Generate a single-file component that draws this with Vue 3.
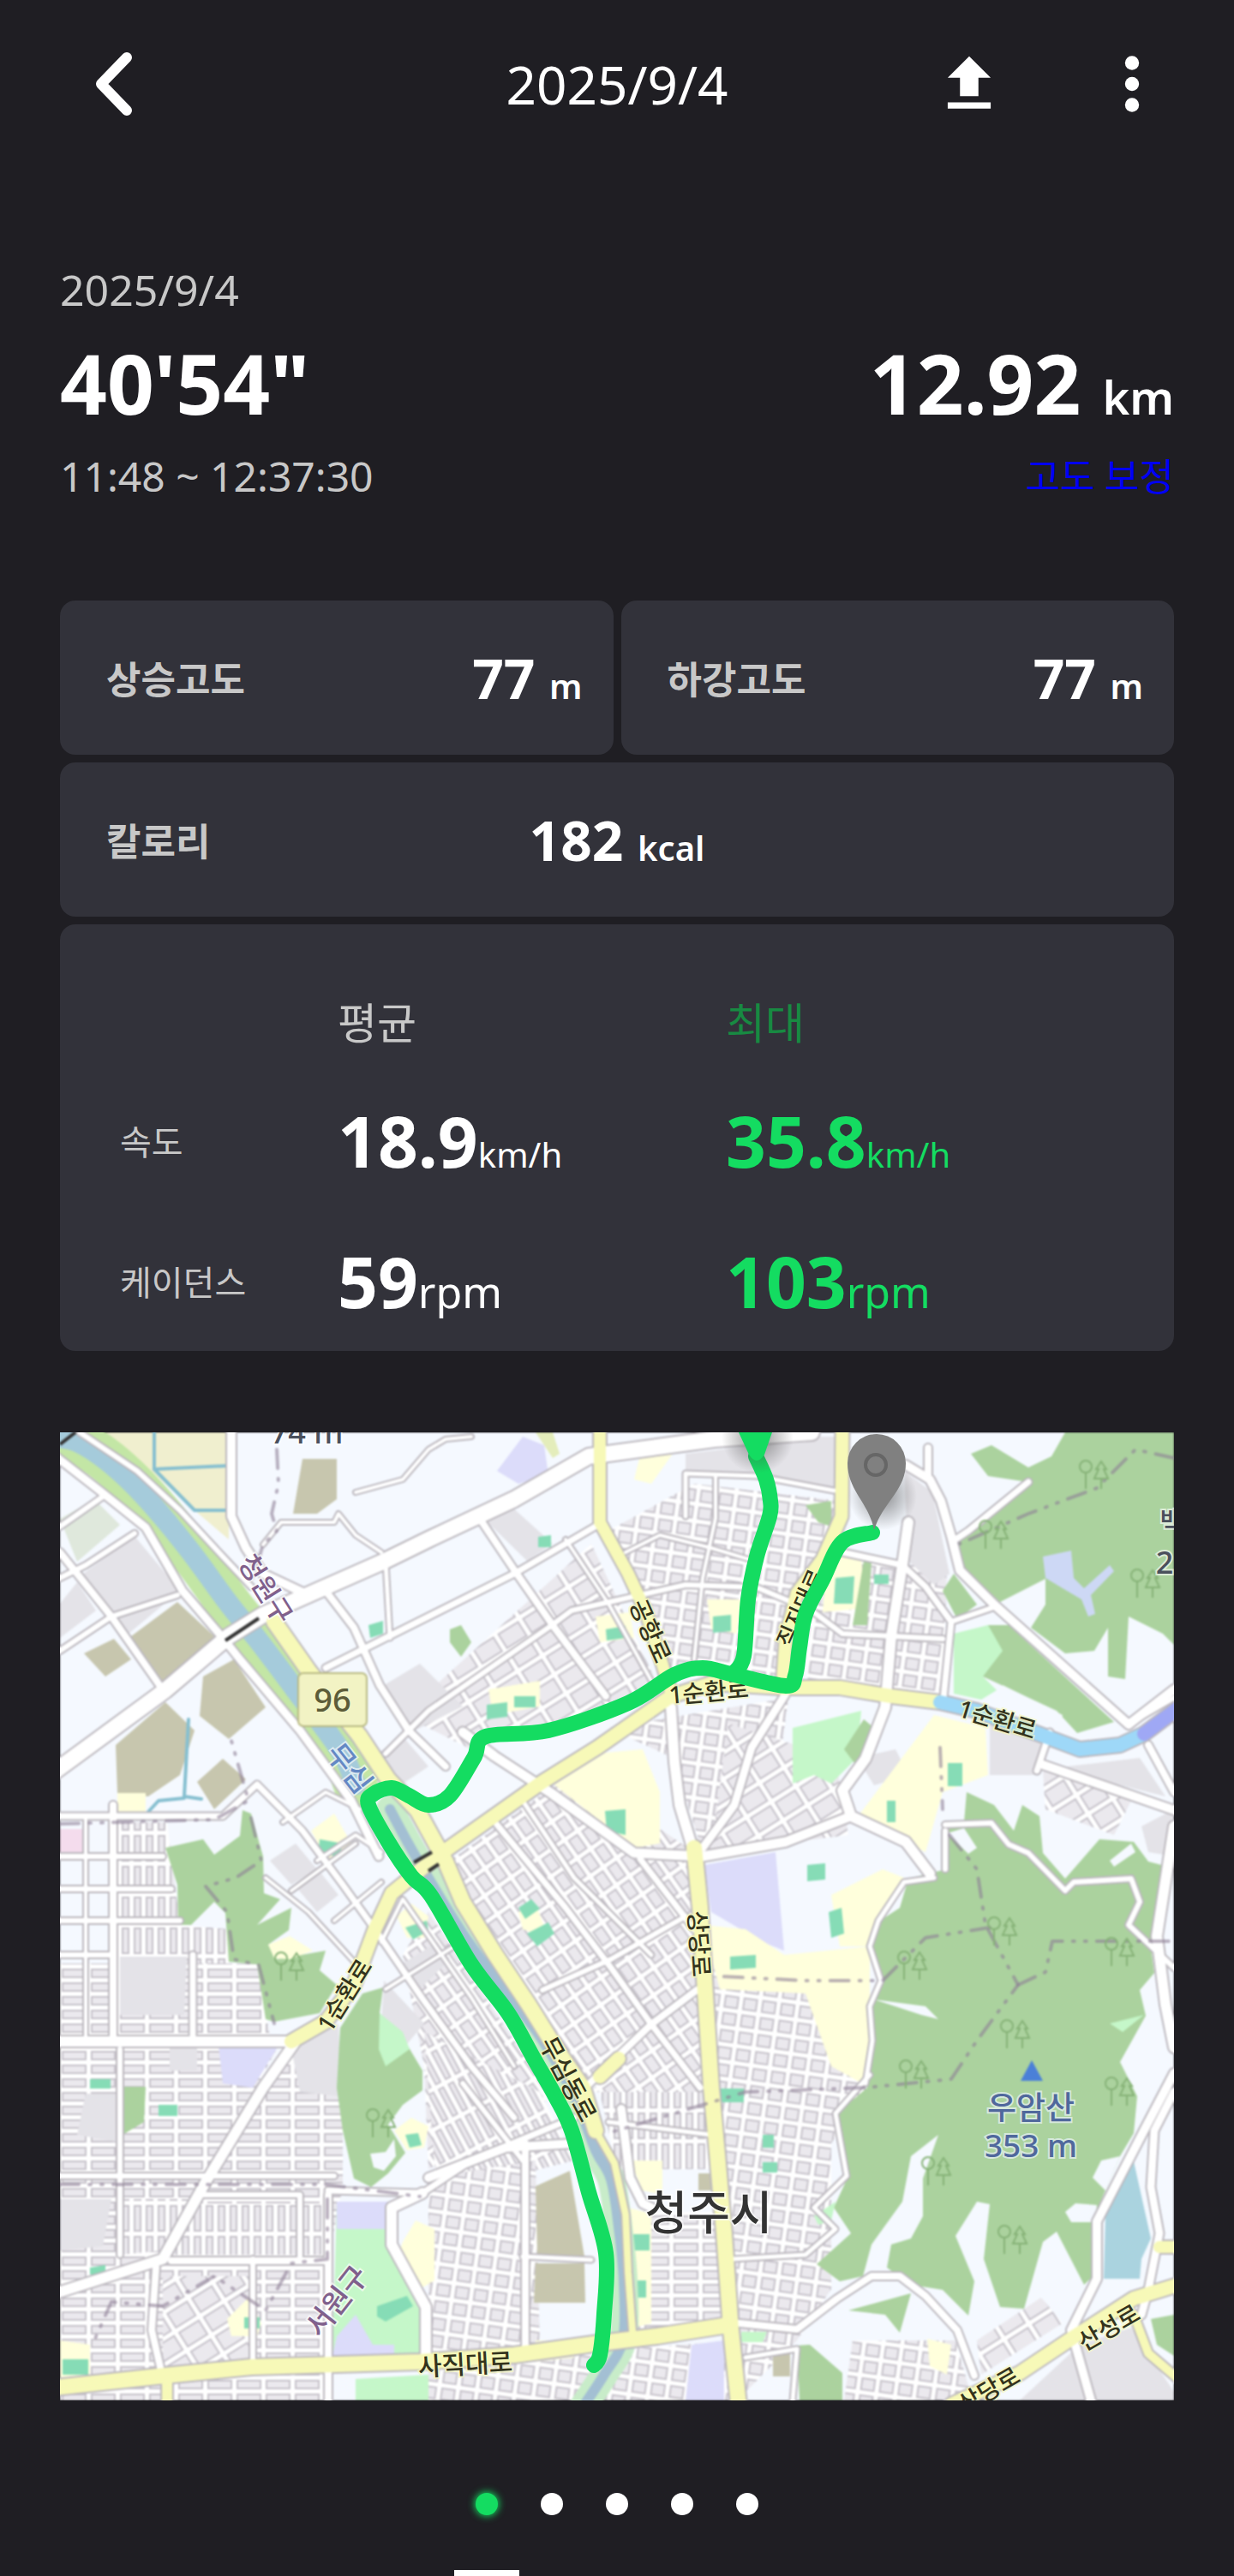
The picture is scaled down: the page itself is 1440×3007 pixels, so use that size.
<template>
  <div class="page">
    <header class="top-bar">
      <button class="icon-btn back-btn" aria-label="뒤로">
        <svg viewBox="0 0 98 98" width="98" height="98">
          <path d="M78 18 L48 49 L78 80" fill="none" stroke="#fff" stroke-width="12" stroke-linecap="round" stroke-linejoin="round" />
        </svg>
      </button>
      <h1>{{ ride.date }}</h1>
      <div class="actions">
        <button class="icon-btn" aria-label="공유">
          <svg viewBox="0 0 24 24" width="86" height="86">
            <path d="M9 16h6v-6h4l-7-7-7 7h4zM5 18h14v2H5z" fill="#fff" />
          </svg>
        </button>
        <button class="icon-btn" aria-label="더보기">
          <svg viewBox="0 0 24 24" width="98" height="98" fill="#fff">
            <circle cx="12" cy="6" r="2" />
            <circle cx="12" cy="12" r="2" />
            <circle cx="12" cy="18" r="2" />
          </svg>
        </button>
      </div>
    </header>

    <main>
      <section class="summary">
        <div class="sub">{{ ride.date }}</div>
        <div class="totals">
          <strong>{{ ride.duration }}</strong>
          <strong>{{ ride.distance }} <small>km</small></strong>
        </div>
        <div class="sub totals">
          <span>{{ ride.period }}</span>
          <a href="#" @click.prevent>고도 보정</a>
        </div>
      </section>

      <section class="cards">
        <div v-for="card in cards" :key="card.label" class="card" :class="{ wide: card.wide }">
          <span class="label">{{ card.label }}</span>
          <span class="value">{{ card.value }} <small>{{ card.unit }}</small></span>
        </div>
        <div class="card stats">
          <table>
            <thead>
              <tr>
                <th class="name"></th>
                <th class="avg">평균</th>
                <th class="max">최대</th>
              </tr>
            </thead>
            <tbody>
              <tr v-for="row in stats" :key="row.name">
                <th class="name">{{ row.name }}</th>
                <td><b>{{ row.avg }}</b><span :class="row.size">{{ row.unit }}</span></td>
                <td class="max"><b>{{ row.max }}</b><span :class="row.size">{{ row.unit }}</span></td>
              </tr>
            </tbody>
          </table>
        </div>
      </section>

      <svg class="map" viewBox="0 0 1300 1130" role="img" aria-label="주행 경로">
        <defs>
          <pattern
            v-for="p in patterns"
            :id="p.id"
            :key="p.id"
            :width="p.w"
            :height="p.h"
            patternUnits="userSpaceOnUse"
            :patternTransform="`rotate(${p.angle})`"
          >
            <rect :width="p.w" :height="p.h" fill="#fff" />
            <rect x="3" y="3" :width="p.w - 7" :height="p.h - 7" fill="#ebe9ee" stroke="#c6c2ca" stroke-width="2" />
          </pattern>
          <radialGradient id="pinShadow">
            <stop offset="0" stop-color="#444" stop-opacity="0.6" />
            <stop offset="1" stop-color="#444" stop-opacity="0" />
          </radialGradient>
          <g id="trees" fill="none" stroke="#86b277" stroke-width="2">
            <circle cx="-10" cy="-8" r="7" />
            <path d="M-10 -1V18M8 -14L2 -5H5L0 6H16L11 -5H14ZM8 6V18" />
          </g>
        </defs>

        <g class="base">
          <rect width="1300" height="1130" fill="#f5f9ff" />
          <polygon v-for="(a, i) in areas" :key="'a' + i" :points="a[1]" :fill="a[0]" />

          <!-- river -->
          <path class="line" :d="smooth(river)" stroke="#c3e6a5" stroke-width="52" />
          <path class="line" :d="smooth(river)" stroke="#a5cbdb" stroke-width="24" />
          <path class="line" :d="smooth(riverSouth)" stroke="#c8ecc9" stroke-width="32" />
          <path class="line" :d="smooth(riverSouth)" stroke="#a3bfd3" stroke-width="12" />
          <polyline v-for="(c, i) in canals" :key="'c' + i" class="line" :points="c" stroke="#86bfd0" stroke-width="4" />

          <!-- roads: casing first, then surface -->
          <polyline v-for="(r, i) in roads" :key="'k' + i" class="line" :points="r[2]" stroke="#bcb8be" :stroke-width="r[1] + 4" />
          <polyline v-for="(r, i) in roads" :key="'r' + i" class="line" :points="r[2]" :stroke="r[0]" :stroke-width="r[1]" />

          <polyline v-for="(b, i) in borders" :key="'b' + i" class="line border" :points="b" />
          <path d="M413 502 L434 490 M430 512 L442 504 M193 243 L232 217 M0 14 L18 0" stroke="#333" stroke-width="4" />
          <use v-for="(t, i) in trees" :key="'t' + i" href="#trees" :x="t[0]" :y="t[1]" />
          <path d="M1134 733 L1147 757 H1121Z" fill="#4b80d8" />
          <rect x="278" y="281" width="80" height="62" rx="6" fill="#f2f3c4" stroke="#b9ba84" stroke-width="2" />
        </g>

        <g class="labels">
          <text
            v-for="(l, i) in labels"
            :key="'l' + i"
            :class="l.kind"
            :font-size="l.size"
            :transform="`translate(${l.x} ${l.y}) rotate(${l.angle || 0})`"
            dy="0.36em"
          >{{ l.text }}</text>
        </g>

        <path v-for="(r, i) in route" :key="'route' + i" class="line" :d="smooth(r)" stroke="#14dc61" stroke-width="18" />
        <circle cx="814" cy="6" r="42" fill="url(#pinShadow)" />
        <path d="M792 0H831L822 26Q813 40 804 26Z" fill="#14dc61" />
        <circle cx="960" cy="74" r="40" fill="url(#pinShadow)" />
        <path d="M950 114 C944 82 919 68 919 36 A34 34 0 0 1 987 36 C987 68 960 82 950 114Z" fill="#808080" />
        <circle cx="952" cy="38" r="12" fill="none" stroke="#666" stroke-width="4" />
      </svg>

      <nav class="dots" aria-label="페이지">
        <button
          v-for="n in 5"
          :key="n"
          :class="{ active: n === current }"
          :aria-label="n + '페이지'"
          @click="current = n"
        ></button>
      </nav>
    </main>
    <div class="tab-line"><i></i></div>
  </div>
</template>

<script setup>
import { ref } from 'vue'

const current = ref(1)

const ride = {
  date: '2025/9/4',
  duration: '40\'54"',
  distance: '12.92',
  period: '11:48 ~ 12:37:30'
}

const cards = [
  { label: '상승고도', value: 77, unit: 'm' },
  { label: '하강고도', value: 77, unit: 'm' },
  { label: '칼로리', value: 182, unit: 'kcal', wide: true }
]

const stats = [
  { name: '속도', avg: '18.9', max: '35.8', unit: 'km/h', size: 'small' },
  { name: '케이던스', avg: '59', max: '103', unit: 'rpm', size: 'large' }
]

// curve through every point of an "x,y x,y" list
function smooth(points) {
  const p = points.split(' ').map(s => s.split(',').map(Number))
  let d = `M${p[0]}`
  for (let i = 0; i < p.length - 1; i++) {
    const a = p[i - 1] || p[i]
    const b = p[i]
    const c = p[i + 1]
    const e = p[i + 2] || c
    d += `C${b[0] + (c[0] - a[0]) / 6} ${b[1] + (c[1] - a[1]) / 6} `
    d += `${c[0] - (e[0] - b[0]) / 6} ${c[1] - (e[1] - b[1]) / 6} ${c[0]} ${c[1]}`
  }
  return d
}

const patterns = [
  { id: 'flat', angle: 0, w: 34, h: 16 },
  { id: 'tall', angle: 0, w: 14, h: 36 },
  { id: 'tilt', angle: 55, w: 26, h: 19 },
  { id: 'slope', angle: -32, w: 34, h: 26 },
  { id: 'lean', angle: 8, w: 22, h: 20 },
  { id: 'curve', angle: 62, w: 42, h: 13 }
]

// [fill, points]
const forest = '#abd29e'
const park = '#c5f7c9'
const school = '#ffffdc'
const pitch = '#86dcb6'
const bare = '#c7c6ae'
const block = '#e4e3e8'
const lilac = '#dcdcfa'
const ground = '#f5f9ff'

const areas = [
  // street blocks
  ['url(#tall)', '62,455 125,455 140,575 197,580 197,620 62,620'],
  ['url(#flat)', '0,620 230,620 245,705 0,705'],
  ['url(#flat)', '0,716 255,716 120,965 0,1000'],
  ['url(#flat)', '270,716 330,760 330,880 313,965 125,965'],
  ['url(#tall)', '150,900 310,900 310,960 125,960'],
  ['url(#tall)', '70,895 150,895 120,955 70,960'],
  ['url(#flat)', '0,1010 120,970 313,970 313,1090 0,1110'],
  ['url(#slope)', '120,985 225,985 225,1085 120,1092'],
  ['url(#flat)', '0,1120 310,1095 313,1130 0,1130'],
  ['url(#tilt)', '400,610 430,560 570,770 560,800 430,860 425,740'],
  ['url(#curve)', '425,700 560,770 600,850 440,890'],
  ['url(#slope)', '400,330 620,130 700,300 480,370'],
  ['url(#tilt)', '455,500 600,395 740,490 750,700 640,770 590,735'],
  ['url(#lean)', '640,115 740,60 910,80 850,290 710,285'],
  ['url(#lean)', '640,345 850,310 840,385 910,440 860,480 750,490 715,380'],
  ['url(#slope)', '780,340 905,380 920,470 760,490'],
  ['url(#lean)', '880,140 1035,160 1030,308 870,300'],
  ['url(#lean)', '430,870 555,850 560,1070 430,1080'],
  ['url(#tall)', '630,770 760,770 770,860 650,860'],
  ['url(#flat)', '660,910 775,910 780,1045 670,1050'],
  ['url(#tilt)', '680,690 755,660 765,770 620,770'],
  ['url(#lean)', '760,620 945,670 940,770 900,830 900,1000 860,1060 790,1130 775,900'],
  ['url(#lean)', '430,1085 800,1060 800,1130 430,1130'],
  ['url(#slope)', '1070,1060 1145,1010 1170,1040 1075,1100'],
  ['url(#lean)', '925,1060 1045,1060 1065,1130 915,1130'],
  ['url(#slope)', '1147,395 1250,430 1230,470 1150,440'],
  // plain blocks
  [block, '87,121 140,185 80,235 27,165'],
  ['#dfe8dc', '0,101 40,78 70,108 20,151'],
  [block, '0,200 20,175 42,208 0,240'],
  [block, '497,103 525,85 575,130 545,150'],
  [block, '370,300 420,270 470,320 410,350'],
  [block, '370,375 400,355 430,390 400,410'],
  [block, '245,500 275,480 300,510 270,528'],
  [block, '275,530 305,515 325,540 300,560'],
  [block, '70,612 148,612 145,680 70,680'],
  [block, '270,720 325,690 328,775 280,770'],
  [block, '378,640 425,690 400,720 375,690'],
  [block, '400,620 440,595 455,615 420,650'],
  [block, '30,772 65,772 65,828 20,820'],
  [block, '128,716 160,716 160,745 128,745'],
  [block, '0,895 60,895 50,950 0,955'],
  [block, '730,25 815,15 905,10 903,65 810,48 730,48'],
  [block, '870,5 905,5 905,60 870,50'],
  [block, '985,45 1018,70 1038,165 1020,178 990,150'],
  [block, '1085,340 1145,360 1140,400 1085,400'],
  [block, '1175,390 1260,380 1290,425 1190,400'],
  [block, '1262,460 1300,440 1300,495 1270,490'],
  [block, '1120,1130 1190,1065 1250,1045 1300,1120 1300,1130'],
  [block, '930,380 975,370 990,400 950,412'],
  // fields
  ['#f0efcf', '53,0 197,0 197,125 157,91 100,40'],
  ['#e4edbb', '555,0 575,0 583,25 575,30'],
  [bare, '283,31 323,31 323,78 300,95 272,95'],
  [bare, '137,198 180,238 123,295 83,238'],
  [bare, '63,241 83,265 53,285 28,258'],
  [bare, '167,285 203,265 240,321 197,358 163,331'],
  [bare, '123,315 157,348 140,400 103,425 67,421 65,365'],
  [bare, '160,408 190,381 217,405 180,440'],
  [bare, '555,880 595,862 612,962 557,962'],
  [bare, '555,970 612,970 613,1016 553,1016'],
  [bare, '745,865 780,865 780,885 745,885'],
  [bare, '832,1075 852,1070 852,1102 832,1102'],
  [lilac, '510,45 540,5 565,15 570,50 535,60'],
  [lilac, '752,505 835,490 845,605 820,595 760,560'],
  [lilac, '185,716 255,716 225,765 190,760'],
  [lilac, '737,1065 775,1060 775,1130 730,1130'],
  ['#f4dced', '0,463 30,463 30,493 0,493'],
  // schools
  [school, '575,410 625,375 680,370 700,420 700,480 670,485'],
  [school, '750,575 800,580 845,610 945,600 945,765 900,740 870,655 770,650'],
  [school, '960,410 1020,330 1080,345 1083,400 1030,420 1010,490 930,450'],
  [school, '900,540 960,510 985,520 945,600 910,600'],
  [school, '535,560 555,550 570,590 540,580'],
  [school, '665,850 703,850 703,890 680,885'],
  [school, '663,905 690,912 690,1040 670,1045'],
  [school, '400,945 415,920 437,930 437,990 420,1000 395,960'],
  [school, '67,421 100,421 100,447 67,447'],
  [school, '293,465 320,445 340,480 315,505'],
  [school, '393,565 410,550 430,565 425,590 405,590'],
  [school, '195,1035 220,1010 235,1040 230,1055 200,1055'],
  [school, '0,1060 35,1065 35,1100 0,1105'],
  [school, '500,300 560,290 560,320 505,330'],
  [school, '625,215 665,210 670,240 630,245'],
  [school, '755,195 795,195 790,235 760,230'],
  [school, '895,145 935,145 940,205 890,210'],
  [school, '680,15 715,25 690,60 670,55'],
  [school, '555,1060 600,1060 600,1080 555,1085'],
  [school, '1012,1058 1040,1065 1035,1100 1015,1090'],
  // forests
  [forest, '1033,465 1030,511 990,521 980,555 960,568 947,595 960,641 947,668 950,711 942,765 903,798 920,868 903,905 923,935 883,971 910,991 937,985 947,948 983,898 993,845 1025,820 1007,871 1007,915 993,941 970,948 965,975 993,995 1030,1001 1060,1031 1067,991 1045,938 1070,898 1085,901 1078,965 1097,1021 1125,1023 1147,945 1163,933 1195,995 1210,981 1207,915 1237,845 1253,818 1257,775 1237,735 1267,681 1260,651 1277,631 1273,601 1297,508 1270,501 1253,478 1213,475 1173,521 1147,491 1143,448 1123,435 1113,465 1090,435 1058,420 1055,455'],
  [ground, '1035,468 1055,462 1070,485 1060,492'],
  [ground, '1205,870 1215,850 1237,845 1220,885'],
  [ground, '1173,910 1185,900 1210,902 1208,922 1180,922'],
  [ground, '950,662 1010,670 1025,685 1005,680'],
  [ground, '1225,500 1250,480 1255,490 1230,507'],
  [forest, '1173,0 1157,28 1130,41 1087,15 1063,25 1083,51 1130,58 1060,111 1047,121 1050,155 1097,198 1150,171 1150,201 1133,228 1173,258 1207,255 1223,228 1223,285 1243,288 1247,215 1287,235 1300,248 1300,0'],
  ['#cdd8f5', '1147,145 1180,138 1183,170 1195,182 1225,155 1230,162 1203,190 1208,212 1200,215 1192,195 1175,185 1150,170'],
  [forest, '1030,185 1043,165 1070,201 1047,218'],
  [forest, '1083,225 1107,225 1230,338 1187,351 1163,325 1077,285'],
  [park, '1043,235 1083,225 1100,255 1077,285 1093,301 1075,312 1043,305'],
  [ground, '1100,295 1170,330 1165,352 1092,325'],
  [park, '855,345 935,325 930,380 900,410 880,400 855,410'],
  [forest, '915,370 938,335 950,345 930,390'],
  [forest, '870,85 900,80 900,110 885,105'],
  [forest, '938,150 947,150 942,225 925,225'],
  [forest, '123,485 167,475 180,493 210,471 213,441 223,445 237,495 238,538 257,545 230,575 270,555 267,581 243,598 253,615 310,605 303,628 323,645 303,678 250,688 240,685 230,621 197,618 193,561 180,548 153,575 138,575 137,528'],
  [school, '243,598 268,588 295,605 268,615 250,614'],
  [forest, '377,648 373,678 407,718 423,745 423,768 400,785 383,808 403,841 383,865 363,881 343,871 330,815 323,765 327,695 353,655'],
  [park, '373,678 400,700 408,720 380,740 372,720'],
  [ground, '362,842 380,840 390,825 392,845 378,862 366,858'],
  [school, '390,815 410,800 430,810 425,835 405,838'],
  [forest, '73,764 100,764 98,805 73,820 68,795'],
  [forest, '455,230 468,225 480,245 468,262 455,245'],
  [forest, '1273,1035 1300,1030 1300,1078 1280,1065'],
  [forest, '860,1066 875,1065 913,1098 913,1130 863,1130'],
  [forest, '920,1025 993,1005 980,1051 963,1030'],
  [park, '880,915 905,898 900,920 885,925'],
  [park, '1225,690 1265,680 1240,700'],
  [park, '795,1050 825,1050 820,1062 795,1062'],
  [park, '323,898 383,898 383,955 420,1025 420,1078 318,1078'],
  [lilac, '323,898 383,898 380,930 323,930'],
  [lilac, '323,1055 345,1030 365,1065 390,1065 390,1078 318,1078'],
  [park, '345,1105 430,1100 430,1130 345,1130'],
  // sports pitches
  [pitch, '370,1020 405,1008 412,1020 380,1038 370,1032'],
  [pitch, '636,442 660,440 660,470 638,465'],
  [pitch, '535,555 550,545 560,556 543,568'],
  [pitch, '545,585 570,572 577,585 557,600'],
  [pitch, '782,612 812,610 812,625 782,627'],
  [pitch, '897,560 912,555 915,585 900,590'],
  [pitch, '872,505 893,503 893,522 872,524'],
  [pitch, '1036,386 1053,386 1053,413 1036,413'],
  [pitch, '965,430 975,430 975,455 965,455'],
  [pitch, '905,170 927,168 925,200 903,200'],
  [pitch, '950,166 967,166 967,177 950,177'],
  [pitch, '762,215 783,213 783,232 762,234'],
  [pitch, '637,230 660,226 660,240 638,243'],
  [pitch, '558,122 573,120 573,134 558,134'],
  [pitch, '498,318 522,315 522,332 498,335'],
  [pitch, '530,308 555,308 555,321 530,321'],
  [pitch, '360,225 377,220 377,235 362,240'],
  [pitch, '303,475 330,480 325,497 302,487'],
  [pitch, '403,578 428,570 430,582 412,592'],
  [pitch, '403,820 418,818 422,832 408,835'],
  [pitch, '35,755 59,755 59,766 35,766'],
  [pitch, '115,785 137,785 137,798 115,798'],
  [pitch, '35,975 53,972 53,983 35,983'],
  [pitch, '3,1082 33,1082 33,1100 3,1100'],
  [pitch, '215,1033 233,1033 233,1046 215,1046'],
  [pitch, '770,766 798,766 798,782 770,782'],
  [pitch, '820,820 833,820 833,835 820,835'],
  [pitch, '820,852 837,852 837,864 820,864'],
  [pitch, '665,936 688,936 688,955 665,955'],
  [pitch, '671,990 684,990 684,1010 671,1010'],
  ['#aad3df', '1253,851 1273,941 1262,965 1260,988 1218,988 1220,915']
]

const river = '-10,5 20,11 57,35 100,76 150,136 197,200 230,241 273,298 327,371 345,411'
const riverSouth = '385,440 415,495 470,585 514,645 560,705 600,775 625,838 643,872 652,928 658,991 657,1059 635,1100 612,1135'

const canals = [
  '110,0 110,43 195,39',
  '110,43 157,91 195,91',
  '150,335 145,425 165,428',
  '145,427 115,430 103,443'
]

// [surface, width, points]
const white = '#fff'
const yellow = '#f7f9b8'
const roads = [
  [white, 6, '23,0 90,45 140,91 190,145 223,180'],
  [white, 10, '200,0 200,98 217,135 237,165 290,190'],
  [white, 9, '-5,28 50,71 100,111 143,185 190,240 210,265 280,348 340,430 372,495'],
  [white, 6, '0,170 30,155 87,118'],
  [white, 6, '0,110 50,75'],
  [white, 8, '0,140 60,215 123,305'],
  [white, 6, '0,255 60,215 137,190'],
  [white, 4, '237,131 258,105 320,105 325,95 345,120 375,140'],
  [white, 4, '345,70 400,55 430,20 450,8 480,5'],
  [white, 5, '380,151 385,240'],
  [white, 8, '310,185 343,228 373,295 407,348 450,390'],
  [white, 7, '310,275 430,215 530,165 633,105'],
  [white, 8, '490,101 533,165 577,228 637,308'],
  [white, 6, '380,375 430,325 570,228 597,208 730,178 813,181 877,208 913,235 1030,241'],
  [white, 5, '730,98 730,48 813,51 903,68'],
  [white, 4, '740,265 750,170 765,100 765,50'],
  [white, 4, '660,140 700,120 760,135 810,150'],
  [white, 4, '590,125 640,200 690,290'],
  [white, 18, '-5,395 123,301 197,238 237,213 300,185 377,151 430,125 530,78 617,28 763,8 877,0'],
  [white, 8, '1013,18 1013,50'],
  [white, 10, '987,38 1015,55 1028,80 1040,121 1050,161 1090,201 1247,341 1300,300'],
  [white, 7, '1130,58 1060,115 1045,125'],
  [white, 12, '990,105 983,155 970,238 963,321 940,381 913,418 923,448 987,478 1015,515'],
  [white, 7, '913,140 983,155 1010,180 1040,221 1030,320'],
  [white, 6, '1040,221 1087,205'],
  [white, 11, '923,448 847,478 750,495 670,491 573,421 507,378 470,350'],
  [white, 9, '847,305 807,368 787,435 750,485'],
  [white, 12, '713,321 717,385 723,435 738,485'],
  [white, 7, '510,458 590,555 643,625 690,691 747,765'],
  [white, 7, '677,498 740,580'],
  [white, 6, '563,651 643,615 730,565'],
  [white, 8, '743,651 690,691 617,761'],
  [white, 5, '540,430 600,520 690,610'],
  [white, 12, '-5,711 270,711'],
  [white, 8, '62,435 62,711'],
  [white, 4, '30,450 30,705'],
  [white, 7, '0,448 62,448 190,448 230,411 283,465 330,528 373,588 423,661 480,740 530,800'],
  [white, 4, '260,455 310,420 350,440'],
  [white, 4, '300,500 345,470 375,490'],
  [white, 4, '240,520 290,560 345,620'],
  [white, 4, '270,535 345,480'],
  [white, 4, '320,570 375,525'],
  [white, 4, '375,595 400,545 480,660 530,740'],
  [white, 4, '380,650 460,600'],
  [white, 6, '0,495 120,495'],
  [white, 6, '0,533 130,533'],
  [white, 6, '0,570 140,570'],
  [white, 6, '0,610 62,610'],
  [white, 7, '155,610 155,705'],
  [white, 12, '275,711 237,765 170,875 120,965 -5,1005'],
  [white, 8, '112,975 107,1048 117,1091'],
  [white, 6, '0,868 320,868'],
  [white, 8, '130,967 313,967'],
  [white, 7, '313,885 423,888 480,850 600,800'],
  [white, 8, '313,890 313,1130'],
  [white, 6, '160,890 280,890 280,965'],
  [white, 6, '70,720 70,960'],
  [white, 6, '225,965 225,1090'],
  [white, 12, '423,888 387,905 387,948 427,1021 427,1081'],
  [white, 10, '430,870 520,835 600,830'],
  [white, 8, '543,830 543,1070'],
  [white, 6, '470,760 540,850'],
  [white, 5, '540,962 620,966'],
  [white, 10, '655,790 665,870 680,900 690,905'],
  [white, 5, '640,805 760,820'],
  [white, 8, '793,1040 860,1047 907,1011 947,985 980,985 1010,1008 1047,1048 1067,1101'],
  [white, 5, '945,750 905,795 918,868 880,905 905,930 870,960 785,965'],
  [white, 5, '800,1080 860,1070 855,1130'],
  [white, 5, '1020,520 985,525 955,570 945,600 958,640 945,670 948,710 940,760'],
  [white, 6, '1033,465 1033,510'],
  [white, 6, '1033,458 1087,456 1107,481 1130,491 1173,535 1183,525 1250,521 1260,548 1247,575 1300,625'],
  [white, 7, '1155,350 1140,395'],
  [white, 10, '1147,388 1300,441'],
  [white, 8, '1270,365 1300,420'],
  [white, 12, '1300,460 1280,588 1290,668 1300,718'],
  [white, 10, '1300,748 1267,811 1210,921 1210,988 1180,1048 1203,1130'],
  [white, 9, '1300,770 1277,815 1273,881 1283,935 1270,1001 1262,1030'],
  [white, 5, '1247,341 1300,310'],
  [yellow, 18, '250,221 290,278 350,355 383,405 417,441 450,501 470,548 507,608 547,668 580,721 610,765 625,815'],
  [yellow, 8, '625,815 647,853 660,913 663,980 668,1048'],
  [yellow, 16, '270,711 310,688 343,645 367,581 387,538 440,495 563,408 627,368 713,308 760,293 843,298 910,298 970,308 1027,315'],
  [yellow, 14, '630,0 630,105 663,165 683,208 703,271 715,310'],
  [yellow, 18, '740,485 747,555 753,655 760,765 767,842 775,935 783,1048 792,1135'],
  [yellow, 18, '-5,1115 123,1101 223,1091 323,1088 420,1085 530,1077 623,1064 697,1055 780,1042'],
  [yellow, 12, '125,1101 125,1135'],
  [yellow, 16, '1040,1135 1120,1098 1180,1058 1253,1011 1305,995'],
  [yellow, 10, '1253,1030 1270,1075 1305,1105'],
  [yellow, 14, '1283,951 1305,951'],
  [yellow, 15, '913,-5 912,98 890,148 860,188 847,241 843,298'],
  [yellow, 16, '652,731 630,752'],
  ['#9ed8f8', 16, '1027,315 1070,325 1150,355 1190,370 1237,365 1265,352'],
  ['#9fa8f5', 16, '1265,352 1305,322']
]

const borders = [
  '253,20 255,60 247,95 253,115 237,131 225,170',
  '1300,30 1255,20 1210,65 1130,95 1050,130',
  '1038,470 1070,510 1080,575 1118,645 1070,710 1040,755 940,765 800,770 640,818',
  '1085,578 1010,590 960,640 870,640 770,635',
  '1118,645 1150,630 1158,594 1300,594',
  '1027,368 1030,440',
  '223,450 235,500 205,520 170,530 195,560 203,615 232,622 250,690',
  '0,457 180,452 220,430 200,360',
  '0,878 310,878 420,892',
  '312,895 312,965 270,970 240,1025 180,985 120,1020 60,1015 40,1060'
]

const trees = [
  [1100, 581], [1237, 605], [995, 621], [1115, 701], [1112, 941], [1023, 861],
  [1207, 48], [1090, 118], [1267, 175], [1237, 768], [997, 748], [375, 805], [268, 622]
]

const labels = [
  { text: '74 m', x: 288, y: 0, size: 36, kind: 'dark' },
  { text: '청원구', x: 240, y: 183, size: 32, angle: 58, kind: 'district' },
  { text: '96', x: 318, y: 312, size: 38, kind: 'shield' },
  { text: '무심', x: 338, y: 392, size: 34, angle: 52, kind: 'water' },
  { text: '공항로', x: 689, y: 232, size: 28, angle: 66, kind: 'street' },
  { text: '직지대로', x: 864, y: 205, size: 26, angle: -66, kind: 'street' },
  { text: '1순환로', x: 757, y: 303, size: 28, angle: -5, kind: 'street' },
  { text: '1순환로', x: 1094, y: 335, size: 28, angle: 17, kind: 'street' },
  { text: '1순환로', x: 332, y: 657, size: 28, angle: -58, kind: 'street' },
  { text: '상당로', x: 746, y: 597, size: 28, angle: 86, kind: 'street' },
  { text: '무심동로', x: 593, y: 755, size: 29, angle: 62, kind: 'street' },
  { text: '사직대로', x: 473, y: 1088, size: 30, angle: -3, kind: 'street' },
  { text: '서원구', x: 323, y: 1014, size: 34, angle: -52, kind: 'district' },
  { text: '산성로', x: 1224, y: 1045, size: 28, angle: -30, kind: 'street' },
  { text: '상당로', x: 1084, y: 1118, size: 28, angle: -30, kind: 'street' },
  { text: '청주시', x: 757, y: 912, size: 54, kind: 'city' },
  { text: '우암산', x: 1133, y: 789, size: 37, kind: 'peak' },
  { text: '353 m', x: 1133, y: 833, size: 37, kind: 'peak' },
  { text: '백', x: 1298, y: 104, size: 32, kind: 'dark' },
  { text: '2', x: 1289, y: 152, size: 36, kind: 'dark' }
]

const route = [
  '812,28 824,55 829,80 828,98 813,145 803,195 798,261 787,280',
  '948,117 913,128 890,172 870,212 863,251 858,284 847,296 787,283 750,275 717,283 663,316 570,348 497,355 483,380 455,424 430,435 407,424 387,415 366,422 360,435 383,478 410,518 433,541 480,621 523,678 553,731 578,775 597,815 617,887 637,958 635,1029 630,1077 623,1089'
]
</script>

<style>
body {
  margin: 0;
  background: #1f1e23;
}
</style>

<style scoped>
.page {
  background: #1f1e23;
  color: #fff;
  font-family: 'Noto Sans', 'Noto Sans CJK KR', sans-serif;
}

.top-bar {
  display: grid;
  grid-template-columns: 1fr auto 1fr;
  align-items: center;
  height: 196px;
  padding: 0 70px;
}

h1 {
  margin: 0;
  font-size: 62px;
  font-weight: 400;
}

.icon-btn {
  padding: 0;
  border: none;
  background: none;
  cursor: pointer;
}

.icon-btn svg {
  display: block;
}

.back-btn {
  justify-self: start;
}

.actions {
  display: flex;
  align-items: center;
  justify-content: flex-end;
  gap: 98px;
}

main {
  padding: 108px 70px 0;
}

.summary {
  height: 397px;
}

.sub {
  font-size: 50px;
  line-height: 68px;
  color: #c8c8c8;
}

.totals {
  display: flex;
  justify-content: space-between;
  align-items: center;
}

.sub.totals {
  font-size: 48px;
}

.totals strong {
  font-size: 96px;
  line-height: 150px;
}

.totals small {
  font-size: 54px;
  font-weight: 600;
  line-height: 1;
}

.totals a {
  font-size: 44px;
  color: #0000f5;
  text-decoration: none;
}

.cards {
  display: grid;
  grid-template-columns: 1fr 1fr;
  gap: 9px;
}

.card {
  display: flex;
  align-items: center;
  justify-content: space-between;
  height: 180px;
  padding: 0 36px 0 54px;
  box-sizing: border-box;
  border-radius: 18px;
  background: #32323a;
}

.card.wide {
  display: grid;
  grid-template-columns: 1fr auto 1fr;
  grid-column: span 2;
  padding: 0 54px;
}

.label {
  font-size: 44px;
  font-weight: 700;
  color: #c8c8c8;
}

.value {
  font-size: 64px;
  font-weight: 700;
}

.value small {
  font-size: 40px;
  font-weight: 600;
}

.card.stats {
  display: block;
  grid-column: span 2;
  height: auto;
  padding: 60px 0 0 70px;
}

table {
  width: 100%;
  table-layout: fixed;
  border-collapse: collapse;
}

th,
td {
  height: 164px;
  padding: 0;
  text-align: left;
  font-weight: 400;
}

thead th {
  height: 110px;
  font-size: 50px;
  line-height: 64px;
  color: #c8c8c8;
}

.name {
  width: 254px;
  font-size: 40px;
  color: #c8c8c8;
}

.avg {
  width: 453px;
}

td b {
  font-size: 82px;
  line-height: 100px;
}

.small {
  font-size: 40px;
}

.large {
  font-size: 50px;
}

td.max {
  color: #14dc61;
}

thead .max {
  color: #188a42;
}

.map {
  display: block;
  width: 100%;
  margin-top: 95px;
}

.base {
  filter: blur(1px);
}

.line {
  fill: none;
  stroke-linejoin: round;
  stroke-linecap: round;
}

.border {
  stroke: #8d7f96;
  stroke-opacity: 0.6;
  stroke-width: 4;
  stroke-dasharray: 22 12 2 12 2 12;
}

.labels text {
  text-anchor: middle;
  font-weight: 500;
  paint-order: stroke;
  stroke: rgba(255, 255, 255, 0.6);
  stroke-width: 4px;
}

.labels .street {
  fill: #33331c;
  stroke: #f7f9b8;
  stroke-opacity: 0.6;
}

.labels .district {
  fill: #80608c;
}

.labels .shield {
  fill: #5c5c38;
  stroke: none;
}

.labels .water {
  fill: #6488c4;
}

.labels .dark {
  fill: #4a505c;
}

.labels .city {
  fill: #333;
}

.labels .peak {
  fill: #50689c;
  stroke: #d6e8dc;
}

.dots {
  display: flex;
  justify-content: center;
  align-items: center;
  gap: 50px;
  height: 28px;
  padding: 107px 0 63px;
}

.dots button {
  width: 26px;
  height: 26px;
  padding: 0;
  border: none;
  border-radius: 50%;
  background: #fff;
  cursor: pointer;
}

.dots .active {
  background: #14dc61;
  box-shadow: 0 0 8px 1px #14dc61;
}

.tab-line {
  display: flex;
  justify-content: center;
}

/* sits under the first dot */
.tab-line i {
  width: 76px;
  height: 7px;
  margin-right: 304px;
  background: #fff;
}
</style>
